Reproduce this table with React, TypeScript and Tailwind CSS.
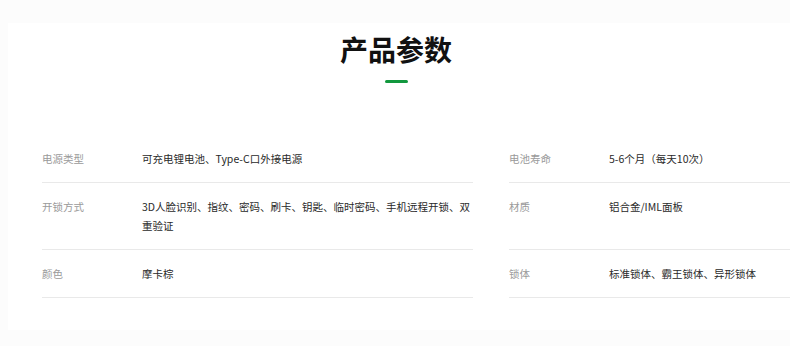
import React from "react";

const rows: [string, string][] = [
  ["电源类型", "可充电锂电池、Type-C口外接电源"],
  ["电池寿命", "5-6个月（每天10次）"],
  ["开锁方式", "3D人脸识别、指纹、密码、刷卡、钥匙、临时密码、手机远程开锁、双重验证"],
  ["材质", "铝合金/IML面板"],
  ["颜色", "摩卡棕"],
  ["锁体", "标准锁体、霸王锁体、异形锁体"],
];

export default function App() {
  return (
    <div
      className="h-[346px] w-[790px] overflow-hidden bg-[#fcfcfc] pt-[23px] pl-[8px]"
      style={{ fontFamily: '"Noto Sans CJK SC", "Noto Sans", sans-serif' }}
    >
      <div className="h-[307px] w-[900px] bg-white pt-[8px]">
        <div className="w-[776px] flex flex-col items-center">
          <h1 className="text-[28px] leading-[36px] font-bold text-[#111]">产品参数</h1>
          <div className="mt-[13px] h-[3px] w-[23px] rounded-full bg-[#12983e]" />
        </div>
        <div className="mt-[52px] ml-[34px] grid w-[898px] grid-cols-[431px_431px] gap-x-[36px]">
          {rows.map(([label, value]) => (
            <div
              key={label}
              className="flex border-b border-[#e9e9e9] py-[14px] text-[10.5px] leading-[19px]"
            >
              <span className="w-[100px] shrink-0 text-[#9a9a9a]">{label}</span>
              <span className="flex-1 text-[#2a2a2a]">{value}</span>
            </div>
          ))}
        </div>
      </div>
    </div>
  );
}
